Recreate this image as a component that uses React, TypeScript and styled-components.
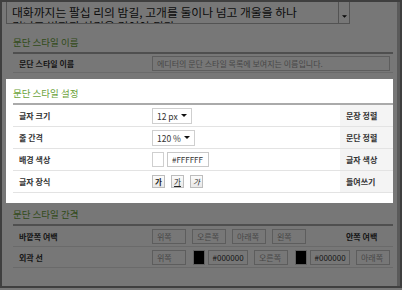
import React from "react";
import styled, { createGlobalStyle } from "styled-components";

const GlobalStyle = createGlobalStyle`
  html, body {
    margin: 0;
    padding: 0;
    background: #fff;
  }
  body {
    font-family: "Noto Sans CJK KR", "Noto Sans", sans-serif;
    color: #333;
  }
`;

interface Props {
  width?: number;
}

function Caret({ width = 6 }: Props): React.ReactElement {
  return (
    <svg width={width} height={3} viewBox="0 0 6 3">
      <path d="M0 0h6L3 3z" fill="#111" />
    </svg>
  );
}

export default function App(): React.ReactElement {
  return (
    <>
      <GlobalStyle />
      <Frame>
        <Content>
          <Preview>
            <PreviewText>
              대화까지는 팔십 리의 밤길, 고개를 둘이나 넘고 개울을 하나
              <br />
              건너고 벌판과 산길을 걸어야 된다.
            </PreviewText>
            <PreviewToggle>
              <Caret width={5} />
            </PreviewToggle>
          </Preview>

          <Section>
            <Title>문단 스타일 이름</Title>
            <Row $wide $h={19}>
              <Label>문단 스타일 이름</Label>
              <Cell>
                <Field $w={238} $muted>
                  에디터의 문단 스타일 목록에 보여지는 이름입니다.
                </Field>
              </Cell>
            </Row>
          </Section>

          <Spotlight>
            <Title>문단 스타일 설정</Title>
            <Row>
              <Label>글자 크기</Label>
              <Cell>
                <Select $w={40}>
                  12 px <Caret />
                </Select>
              </Cell>
              <SideLabel>문장 정렬</SideLabel>
            </Row>
            <Row>
              <Label>줄 간격</Label>
              <Cell>
                <Select $w={43}>
                  120 % <Caret />
                </Select>
              </Cell>
              <SideLabel>문단 정렬</SideLabel>
            </Row>
            <Row>
              <Label>배경 색상</Label>
              <Cell $gap={3}>
                <Swatch $color="#fff" />
                <Field $w={42}>#FFFFFF</Field>
              </Cell>
              <SideLabel>글자 색상</SideLabel>
            </Row>
            <Row>
              <Label>글자 장식</Label>
              <Cell $gap={6}>
                <DecoButton $kind="bold">가</DecoButton>
                <DecoButton $kind="underline">가</DecoButton>
                <DecoButton $kind="italic">가</DecoButton>
              </Cell>
              <SideLabel>들여쓰기</SideLabel>
            </Row>
          </Spotlight>

          <Section $flush>
            <Title>문단 스타일 간격</Title>
            <Row $h={21}>
              <Label>바깥쪽 여백</Label>
              <Cell $gap={6}>
                <Field $w={34} $muted>위쪽</Field>
                <Field $w={34} $muted>오른쪽</Field>
                <Field $w={34} $muted>아래쪽</Field>
                <Field $w={34} $muted>왼쪽</Field>
              </Cell>
              <SideLabel $plain>안쪽 여백</SideLabel>
            </Row>
            <Row $wide $h={21}>
              <Label>외곽 선</Label>
              <Cell $gap={6.5}>
                <Field $w={34} $muted>위쪽</Field>
                <ColorGroup>
                  <Swatch $color="#000" />
                  <Field $w={40}>#000000</Field>
                </ColorGroup>
                <Field $w={34} $muted>오른쪽</Field>
                <ColorGroup>
                  <Swatch $color="#000" />
                  <Field $w={40}>#000000</Field>
                </ColorGroup>
                <Field $w={34} $muted>아래쪽</Field>
                <Swatch $color="#000" />
              </Cell>
            </Row>
          </Section>
        </Content>
        <Track />
      </Frame>
      <Dim />
    </>
  );
}

const Frame = styled.div`
  display: flex;
  width: 402px;
  height: 288px;
  box-sizing: border-box;
  border: 2px solid #888;
  background: #fff;
`;

const Content = styled.div`
  flex: 1;
  min-width: 0;
  padding: 0 4px;
  overflow: hidden;
`;

const Track = styled.div`
  width: 3px;
  background: #c2c2c2;
`;

const Preview = styled.div`
  display: flex;
  width: 344px;
  height: 22px;
  box-sizing: border-box;
  border: 1px solid #b2b2b2;
  border-top: none;
`;

const PreviewText = styled.div`
  flex: 1;
  padding: 3px 0 0 5px;
  font-size: 11.8px;
  line-height: 13.5px;
  color: #1a1a1a;
  white-space: nowrap;
  overflow: hidden;
`;

const PreviewToggle = styled.div`
  display: flex;
  justify-content: center;
  width: 10px;
  padding-top: 13px;
  border-left: 1px solid #b2b2b2;
`;

const Section = styled.section<{ $flush?: boolean }>`
  margin-top: ${(p) => (p.$flush ? 0 : 7)}px;
  padding-left: 7px;
`;

const Spotlight = styled.section`
  position: relative;
  z-index: 2;
  margin-top: 6px;
  padding: 3px 0 10px 7px;
  background: #fff;
`;

const Title = styled.h3`
  margin: 0;
  padding: 3px 0 2px;
  font-size: 9.5px;
  font-weight: normal;
  line-height: 16px;
  color: #6ba33a;
  border-bottom: 2px solid #aaa;
`;

const Row = styled.div<{ $wide?: boolean; $h?: number }>`
  display: grid;
  grid-template-columns: ${(p) => (p.$wide ? "139px 1fr" : "139px 1fr 53px")};
  height: ${(p) => p.$h ?? 22}px;
  box-sizing: border-box;
  border-bottom: 1px solid #e3e3e3;
  overflow: hidden;
`;

const Label = styled.div`
  display: flex;
  align-items: center;
  padding-left: 6px;
  font-size: 8px;
  font-weight: bold;
  color: #333;
  white-space: nowrap;
`;

const SideLabel = styled(Label)<{ $plain?: boolean }>`
  background: ${(p) => (p.$plain ? "transparent" : "#f4f4f4")};
`;

const Cell = styled.div<{ $gap?: number }>`
  display: flex;
  align-items: center;
  gap: ${(p) => p.$gap ?? 4}px;
  min-width: 0;
  white-space: nowrap;
`;

const Field = styled.div<{ $w: number; $muted?: boolean }>`
  display: flex;
  align-items: center;
  flex: none;
  width: ${(p) => p.$w}px;
  height: 15px;
  box-sizing: border-box;
  padding: 0 4px;
  border: 1px solid #c8c8c8;
  background: #fff;
  font-size: 8px;
  color: ${(p) => (p.$muted ? "#999" : "#333")};
  overflow: hidden;
`;

const Select = styled.div<{ $w: number }>`
  display: flex;
  align-items: center;
  justify-content: space-between;
  width: ${(p) => p.$w}px;
  height: 16px;
  box-sizing: border-box;
  padding: 0 4px;
  border: 1px solid #cfcfcf;
  background: #fff;
  font-size: 8.5px;
  color: #333;
`;

const Swatch = styled.div<{ $color: string }>`
  flex: none;
  width: 12px;
  height: 15px;
  box-sizing: border-box;
  border: 1px solid #cfcfcf;
  background: ${(p) => p.$color};
`;

const ColorGroup = styled.div`
  display: flex;
  align-items: center;
  gap: 3px;
`;

const DecoButton = styled.div<{ $kind: "bold" | "underline" | "italic" }>`
  display: flex;
  align-items: center;
  justify-content: center;
  width: 13px;
  height: 13px;
  box-sizing: border-box;
  border: 1px solid #bdbdbd;
  background: linear-gradient(#fbfbfb, #e9e9e9);
  font-size: 7.5px;
  color: #222;
  font-weight: ${(p) => (p.$kind === "bold" ? "bold" : "normal")};
  font-style: ${(p) => (p.$kind === "italic" ? "italic" : "normal")};
  text-decoration: ${(p) => (p.$kind === "underline" ? "underline" : "none")};
`;

const Dim = styled.div`
  position: fixed;
  inset: 0;
  z-index: 1;
  background: rgba(0, 0, 0, 0.533);
  pointer-events: none;
`;
